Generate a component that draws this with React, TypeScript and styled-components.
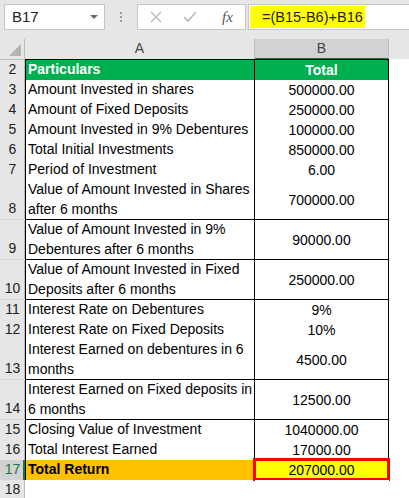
import React from 'react';
import styled, { createGlobalStyle } from 'styled-components';

const GlobalStyle = createGlobalStyle`
  * { box-sizing: border-box; }
  body {
    margin: 0;
    background: #ffffff;
    font-family: "Liberation Sans", Arial, sans-serif;
    overflow: hidden;
  }
`;

const Page = styled.div`
  width: 409px;
  height: 498px;
  overflow: hidden;
  background: #ffffff;
`;

// formula bar
const Toolbar = styled.div`
  display: flex;
  align-items: flex-start;
  height: 39px;
  padding: 4px 0 0 4px;
  background: #e6e6e6;
`;

const NameBox = styled.div`
  position: relative;
  width: 101px;
  height: 26px;
  padding-left: 7px;
  background: #fff;
  border: 1px solid #c6c6c6;
  font-size: 15px;
  line-height: 24px;
  color: #222;
`;

const DropArrow = styled.span`
  position: absolute;
  right: 6px;
  top: 10px;
  border-left: 4px solid transparent;
  border-right: 4px solid transparent;
  border-top: 4px solid #6b6b6b;
`;

const Dots = styled.div`
  width: 32px;
  height: 26px;
  display: flex;
  flex-direction: column;
  align-items: center;
  justify-content: center;
  gap: 2px;

  span {
    width: 2px;
    height: 2px;
    background: #9a9a9a;
  }
`;

const FxBox = styled.div`
  width: 109px;
  height: 26px;
  display: flex;
  align-items: center;
  padding-left: 12px;
  gap: 21px;
  background: #fff;
  border: 1px solid #c6c6c6;
`;

const FxLabel = styled.span`
  font-family: "Liberation Serif", "Times New Roman", serif;
  font-style: italic;
  font-size: 15px;
  color: #555;
  margin-left: 4px;
`;

const FormulaInput = styled.div`
  flex: 1;
  height: 26px;
  margin-left: 2px;
  padding: 1px 0 1px 1px;
  background: #fff;
  border: 1px solid #c6c6c6;
  border-right: none;
`;

const FormulaText = styled.div`
  width: 115px;
  height: 100%;
  padding-left: 12px;
  background: #ffff00;
  font-size: 14.5px;
  line-height: 23px;
  color: #222;
`;

// sheet
const Row = styled.div<{ $h: number }>`
  display: grid;
  grid-template-columns: 25px 230px 134px 1fr;
  height: ${(p) => p.$h}px;
`;

const Corner = styled.div`
  position: relative;
  background: #e6e6e6;
  border-right: 1px solid #bdbdbd;
  border-bottom: 1px solid #bdbdbd;

  &::after {
    content: '';
    position: absolute;
    right: 3px;
    bottom: 3px;
    border-left: 12px solid transparent;
    border-bottom: 12px solid #b4b4b4;
  }
`;

const ColHead = styled.div<{ $active?: boolean }>`
  background: ${(p) => (p.$active ? '#d2d2d2' : '#e6e6e6')};
  border-right: 1px solid #bdbdbd;
  border-bottom: ${(p) => (p.$active ? '2px solid #217346' : '1px solid #bdbdbd')};
  font-size: 14px;
  line-height: 19px;
  text-align: center;
  color: #444;
`;

const Filler = styled.div<{ $head?: boolean }>`
  background: ${(p) => (p.$head ? '#e6e6e6' : '#fff')};
  border-bottom: ${(p) => (p.$head ? '1px solid #bdbdbd' : 'none')};
`;

const RowNum = styled.div<{ $active?: boolean }>`
  display: flex;
  align-items: flex-end;
  justify-content: center;
  padding-bottom: 1px;
  background: ${(p) => (p.$active ? '#d2d2d2' : '#e6e6e6')};
  border-bottom: 1px solid #d6d6d6;
  box-shadow: ${(p) => (p.$active ? 'inset -2px 0 0 #217346' : 'inset -1px 0 0 #bdbdbd')};
  font-size: 14px;
  line-height: 19px;
  color: ${(p) => (p.$active ? '#217346' : '#222')};
`;

type Kind = 'plain' | 'head' | 'total' | 'blank';

const cellBg = (k: Kind, col: 'a' | 'b') => {
  if (k === 'head') return '#00b050';
  if (k === 'total') return col === 'a' ? '#ffc000' : '#ffff00';
  return '#fff';
};

const CellA = styled.div<{ $kind: Kind }>`
  display: flex;
  flex-direction: column;
  justify-content: center;
  padding-left: 2px;
  background: ${(p) => cellBg(p.$kind, 'a')};
  border: 1px solid #000;
  border-top: ${(p) => (p.$kind === 'head' ? '1px solid #000' : 'none')};
  border-width: ${(p) => (p.$kind === 'blank' ? '0' : undefined)};
  font-size: 14px;
  line-height: 19.5px;
  font-weight: ${(p) => (p.$kind === 'head' || p.$kind === 'total' ? 700 : 400)};
  color: ${(p) => (p.$kind === 'head' ? '#fff' : '#000')};
  white-space: nowrap;
`;

const CellB = styled.div<{ $kind: Kind }>`
  position: relative;
  display: flex;
  align-items: center;
  justify-content: center;
  background: ${(p) => cellBg(p.$kind, 'b')};
  border-right: ${(p) => (p.$kind === 'blank' ? 'none' : '1px solid #000')};
  border-bottom: ${(p) => (p.$kind === 'blank' ? 'none' : '1px solid #000')};
  border-top: ${(p) => (p.$kind === 'head' ? '1px solid #000' : 'none')};
  font-size: 14px;
  font-weight: ${(p) => (p.$kind === 'head' ? 700 : 400)};
  color: ${(p) => (p.$kind === 'head' ? '#fff' : '#000')};
`;

const Selection = styled.span`
  position: absolute;
  left: -2px;
  right: -2px;
  top: -2px;
  bottom: -1px;
  border: 3px solid #ff0000;
  pointer-events: none;
`;

type Line = { n: number; a: string[]; b: string; kind?: Kind };

const rows: Line[] = [
  { n: 2, a: ['Particulars'], b: 'Total', kind: 'head' },
  { n: 3, a: ['Amount Invested in shares'], b: '500000.00' },
  { n: 4, a: ['Amount of Fixed Deposits'], b: '250000.00' },
  { n: 5, a: ['Amount Invested in 9% Debentures'], b: '100000.00' },
  { n: 6, a: ['Total Initial Investments'], b: '850000.00' },
  { n: 7, a: ['Period of Investment'], b: '6.00' },
  { n: 8, a: ['Value of Amount Invested in Shares', 'after 6 months'], b: '700000.00' },
  { n: 9, a: ['Value of Amount Invested in 9%', 'Debentures after 6 months'], b: '90000.00' },
  { n: 10, a: ['Value of Amount Invested in Fixed', 'Deposits after 6 months'], b: '250000.00' },
  { n: 11, a: ['Interest Rate on Debentures'], b: '9%' },
  { n: 12, a: ['Interest Rate on Fixed Deposits'], b: '10%' },
  { n: 13, a: ['Interest Earned on debentures in 6', 'months'], b: '4500.00' },
  { n: 14, a: ['Interest Earned on Fixed deposits in', '6 months'], b: '12500.00' },
  { n: 15, a: ['Closing Value of Investment'], b: '1040000.00' },
  { n: 16, a: ['Total Interest Earned'], b: '17000.00' },
  { n: 17, a: ['Total Return'], b: '207000.00', kind: 'total' },
  { n: 18, a: [], b: '', kind: 'blank' },
];

const XIcon = () => (
  <svg width="12" height="12" viewBox="0 0 12 12">
    <path d="M1 1 L11 11 M11 1 L1 11" stroke="#b8b8b8" strokeWidth="1.4" fill="none" />
  </svg>
);

const CheckIcon = () => (
  <svg width="14" height="12" viewBox="0 0 14 12">
    <path d="M1 6 L5 10 L13 1" stroke="#b8b8b8" strokeWidth="1.6" fill="none" />
  </svg>
);

export default function App() {
  return (
    <Page>
      <GlobalStyle />
      <Toolbar>
        <NameBox>
          B17
          <DropArrow />
        </NameBox>
        <Dots>
          <span />
          <span />
          <span />
        </Dots>
        <FxBox>
          <XIcon />
          <CheckIcon />
          <FxLabel>fx</FxLabel>
        </FxBox>
        <FormulaInput>
          <FormulaText>=(B15-B6)+B16</FormulaText>
        </FormulaInput>
      </Toolbar>

      <Row $h={20}>
        <Corner />
        <ColHead>A</ColHead>
        <ColHead $active>B</ColHead>
        <Filler $head />
      </Row>

      {rows.map((r) => {
        const kind = r.kind ?? 'plain';
        const lines = Math.max(r.a.length, 1);
        const h = lines * 20 + (kind === 'head' ? 1 : 0);
        return (
          <Row key={r.n} $h={h}>
            <RowNum $active={kind === 'total'}>{r.n}</RowNum>
            <CellA $kind={kind}>
              {r.a.map((t) => (
                <div key={t}>{t}</div>
              ))}
            </CellA>
            <CellB $kind={kind}>
              {r.b}
              {kind === 'total' && <Selection />}
            </CellB>
            <Filler />
          </Row>
        );
      })}
    </Page>
  );
}
